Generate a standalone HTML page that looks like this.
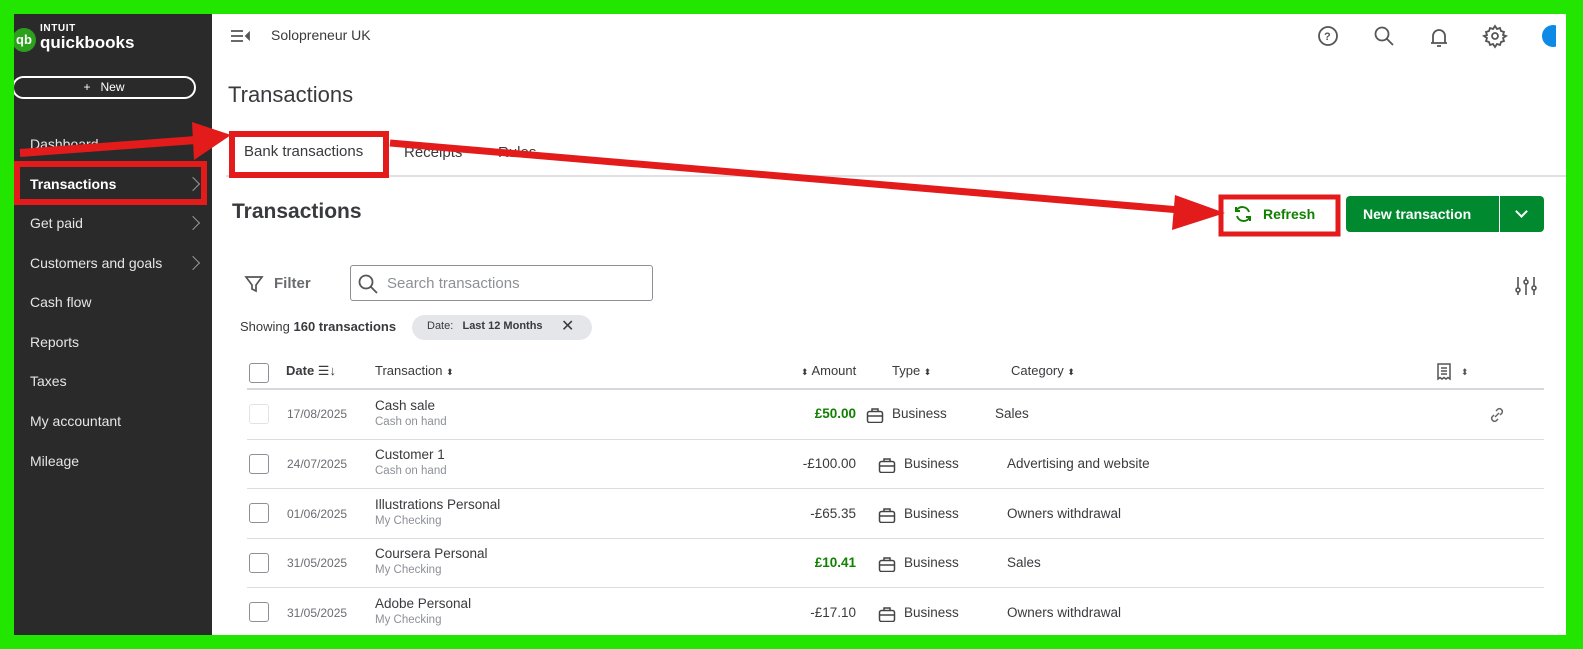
<!DOCTYPE html>
<html><head><meta charset="utf-8"><style>
*{margin:0;padding:0;box-sizing:border-box}
body{width:1583px;height:649px;position:relative;overflow:hidden;background:#22e600;font-family:"Liberation Sans",Arial,sans-serif;color:#393a3d}
.a{position:absolute;white-space:nowrap}
#main{position:absolute;left:14px;top:14px;width:1552px;height:621px;background:#fff;overflow:hidden}
#side{position:absolute;left:0;top:0;width:198px;height:621px;background:#2a2a2a;color:#e8e8e8}
.nav{position:absolute;left:16px;font-size:14px;color:#e6e6e6}
.chev{position:absolute;left:174px;width:10px;height:10px;border-right:1.5px solid #999;border-bottom:1.5px solid #999;transform:rotate(-45deg)}
.hd{font-size:13px;color:#393a3d}
.row{position:absolute;left:233px;width:1297px;height:1px;background:#ddd}
.cb{position:absolute;left:235px;width:20px;height:20px;border:1.5px solid #8d9096;border-radius:3px}
.dt{position:absolute;left:273px;font-size:12px;color:#6b6c72}
.tn{position:absolute;left:361px;font-size:13.5px;color:#393a3d}
.ts{position:absolute;left:361px;font-size:11.5px;color:#8d9096}
.am{position:absolute;right:710px;font-size:13.5px;color:#393a3d;text-align:right}
.g{color:#108000;font-weight:bold}
.ty{position:absolute;font-size:13.5px;color:#393a3d}
.bag{position:absolute;width:18px;height:16px}
</style></head><body>
<div id="main">
 <div id="side">
  <div class="a" style="left:-2px;top:14px;width:24px;height:24px;border-radius:50%;background:#2ca01c;color:#fff;font-size:13px;font-weight:bold;text-align:center;line-height:24px">qb</div>
  <div class="a" style="left:26px;top:9px;font-size:10px;font-weight:bold;letter-spacing:0.6px;color:#fff">INTUIT</div>
  <div class="a" style="left:26px;top:19px;font-size:17px;font-weight:bold;color:#fff">quickbooks</div>
  <div class="a" style="left:-2px;top:62px;width:184px;height:23px;border:2px solid #fff;border-radius:12px;text-align:center;font-size:12px;line-height:19px;color:#fff">+&nbsp;&nbsp; New</div>
  <div class="nav" style="top:122px">Dashboard</div>
  <div class="nav" style="top:162px;font-weight:bold;color:#fff">Transactions</div><div class="chev" style="top:165px"></div>
  <div class="nav" style="top:201px">Get paid</div><div class="chev" style="top:204px"></div>
  <div class="nav" style="top:241px">Customers and goals</div><div class="chev" style="top:244px"></div>
  <div class="nav" style="top:280px">Cash flow</div>
  <div class="nav" style="top:320px">Reports</div>
  <div class="nav" style="top:359px">Taxes</div>
  <div class="nav" style="top:399px">My accountant</div>
  <div class="nav" style="top:439px">Mileage</div>
 </div>
 <svg class="a" style="left:216px;top:14px" width="22" height="16" fill="none" stroke="#555" stroke-width="1.8"><path d="M1 3h12M1 8h12M1 13h12"/><path d="M19 5l-3 3 3 3z" fill="#555"/></svg>
 <div class="a" style="left:257px;top:13px;font-size:14px;color:#393a3d">Solopreneur UK</div>
 <svg class="a" style="left:1302px;top:10px" width="240" height="26" fill="none" stroke="#555" stroke-width="1.8">
  <circle cx="12" cy="12" r="9"/><text x="8" y="16" font-size="11" fill="#555" stroke="none" font-weight="bold" font-family="Liberation Sans">?</text>
  <circle cx="66" cy="10" r="6.5"/><line x1="71" y1="15" x2="77" y2="21"/>
  <path d="M115 19h16M117 19v-7a6 6 0 0 1 12 0v7M121 22h4"/>
  <circle cx="179" cy="12" r="3"/>
  <path d="M179 2l2 3 3-1 1 3 3 1-1 3 3 1-3 2 1 3-3 1-1 3-3-1-2 3-2-3-3 1-1-3-3-1 1-3-3-2 3-1-1-3 3-1 1-3 3 1z"/>
  <circle cx="237" cy="12" r="11" fill="#0d8ae5" stroke="none"/>
 </svg>
 <div class="a" style="left:214px;top:68px;font-size:22px;color:#393a3d">Transactions</div>
 <div class="a" style="left:230px;top:129px;font-size:15px;color:#393a3d">Bank transactions</div>
 <div class="a" style="left:390px;top:130px;font-size:15px;color:#393a3d">Receipts</div>
 <div class="a" style="left:484px;top:130px;font-size:15px;color:#393a3d">Rules</div>
 <div class="a" style="left:212px;top:161px;width:1340px;height:2px;background:#e0e0e3"></div>
 <div class="a" style="left:218px;top:186px;font-size:21px;font-weight:bold;color:#393a3d">Transactions</div>
 <svg class="a" style="left:1219px;top:190px" width="20" height="20" fill="none" stroke="#108000" stroke-width="2"><path d="M16 8a7 7 0 0 0-13-1M4 12a7 7 0 0 0 13 1"/><path d="M3 3v4h4M17 17v-4h-4"/></svg>
 <div class="a" style="left:1249px;top:192px;font-size:14px;font-weight:bold;color:#108000">Refresh</div>
 <div class="a" style="left:1332px;top:182px;width:198px;height:36px;background:#00892e;border-radius:4px"></div>
 <div class="a" style="left:1485px;top:182px;width:1px;height:36px;background:#fff"></div>
 <div class="a" style="left:1349px;top:192px;font-size:14px;font-weight:bold;color:#fff">New transaction</div>
 <div class="a" style="left:1503px;top:193px;width:9px;height:9px;border-right:2px solid #fff;border-bottom:2px solid #fff;transform:rotate(45deg)"></div>
 <svg class="a" style="left:230px;top:260px" width="20" height="20" fill="none" stroke="#555" stroke-width="1.7"><path d="M2 3h16l-6 8v6l-4 -2v-4z"/></svg>
 <div class="a" style="left:260px;top:261px;font-size:15px;font-weight:bold;color:#6b6c72">Filter</div>
 <div class="a" style="left:336px;top:251px;width:303px;height:36px;border:1.5px solid #8d9096;border-radius:3px"></div>
 <svg class="a" style="left:343px;top:259px" width="22" height="22" fill="none" stroke="#555" stroke-width="1.8"><circle cx="9" cy="9" r="6.5"/><line x1="14" y1="14" x2="20" y2="20"/></svg>
 <div class="a" style="left:373px;top:261px;font-size:15px;color:#8d9096">Search transactions</div>
 <svg class="a" style="left:1500px;top:260px" width="24" height="24" fill="none" stroke="#555" stroke-width="1.6"><path d="M4 3v18M12 3v18M20 3v18"/><circle cx="4" cy="16" r="2" fill="#fff"/><circle cx="12" cy="8" r="2" fill="#fff"/><circle cx="20" cy="14" r="2" fill="#fff"/></svg>
 <div class="a" style="left:226px;top:305px;font-size:13px;color:#393a3d">Showing <b>160 transactions</b></div>
 <div class="a" style="left:398px;top:301px;width:180px;height:25px;border-radius:13px;background:#e4e6ea"></div>
 <div class="a" style="left:413px;top:306px;font-size:11px;color:#393a3d">Date:&nbsp;&nbsp; <b>Last 12 Months</b></div>
 <div class="a" style="left:547px;top:302px;font-size:16px;color:#393a3d">✕</div>
 <div class="cb" style="top:349px"></div>
 <div class="a hd" style="left:272px;top:349px;font-weight:bold">Date <span style="font-weight:normal">☰↓</span></div>
 <div class="a hd" style="left:361px;top:349px">Transaction <span style="font-size:9px">⬍</span></div>
 <div class="a hd" style="left:787px;top:349px"><span style="font-size:9px">⬍</span> Amount</div>
 <div class="a hd" style="left:878px;top:349px">Type <span style="font-size:9px">⬍</span></div>
 <div class="a hd" style="left:997px;top:349px">Category <span style="font-size:9px">⬍</span></div>
 <svg class="a" style="left:1422px;top:348px" width="40" height="20" fill="none" stroke="#555" stroke-width="1.5"><path d="M2 2h12v15l-2-1.5-2 1.5-2-1.5-2 1.5-2-1.5-2 1.5z"/><path d="M5 6h6M5 9h6M5 12h6"/><text x="25" y="13" font-size="9" fill="#555" stroke="none">⬍</text></svg>
 <div class="row" style="top:374px;height:2px;background:#d4d7dc"></div>
 <div class="row" style="top:425px"></div><div class="row" style="top:474px"></div><div class="row" style="top:524px"></div><div class="row" style="top:573px"></div>

 <svg width="0" height="0" style="position:absolute"><defs><g id="bg" fill="none" stroke="#444" stroke-width="1.5"><rect x="1.5" y="4.5" width="15" height="11" rx="2"/><path d="M6 4.5V2h6v2.5M1.5 9h15"/></g></defs></svg>

 <div class="cb" style="top:390px;border-color:#e3e3e3"></div><div class="dt" style="top:393px">17/08/2025</div>
 <div class="tn" style="top:384px">Cash sale</div><div class="ts" style="top:402px">Cash on hand</div>
 <div class="am g" style="top:392px">£50.00</div>
 <svg class="bag" style="left:852px;top:393px"><use href="#bg"/></svg><div class="ty" style="left:878px;top:392px">Business</div><div class="ty" style="left:981px;top:392px">Sales</div>
 <svg class="a" style="left:1474px;top:392px" width="18" height="18" fill="none" stroke="#666" stroke-width="1.5"><path d="M7 11l4-4M8 5l2-2a3 3 0 0 1 4 4l-2 2M10 13l-2 2a3 3 0 0 1-4-4l2-2"/></svg>

 <div class="cb" style="top:440px"></div><div class="dt" style="top:443px">24/07/2025</div>
 <div class="tn" style="top:433px">Customer 1</div><div class="ts" style="top:451px">Cash on hand</div>
 <div class="am" style="top:442px">-£100.00</div>
 <svg class="bag" style="left:864px;top:443px"><use href="#bg"/></svg><div class="ty" style="left:890px;top:442px">Business</div><div class="ty" style="left:993px;top:442px">Advertising and website</div>

 <div class="cb" style="top:489px"></div><div class="dt" style="top:493px">01/06/2025</div>
 <div class="tn" style="top:483px">Illustrations Personal</div><div class="ts" style="top:501px">My Checking</div>
 <div class="am" style="top:492px">-£65.35</div>
 <svg class="bag" style="left:864px;top:493px"><use href="#bg"/></svg><div class="ty" style="left:890px;top:492px">Business</div><div class="ty" style="left:993px;top:492px">Owners withdrawal</div>

 <div class="cb" style="top:539px"></div><div class="dt" style="top:542px">31/05/2025</div>
 <div class="tn" style="top:532px">Coursera Personal</div><div class="ts" style="top:550px">My Checking</div>
 <div class="am g" style="top:541px">£10.41</div>
 <svg class="bag" style="left:864px;top:542px"><use href="#bg"/></svg><div class="ty" style="left:890px;top:541px">Business</div><div class="ty" style="left:993px;top:541px">Sales</div>

 <div class="cb" style="top:588px"></div><div class="dt" style="top:592px">31/05/2025</div>
 <div class="tn" style="top:582px">Adobe Personal</div><div class="ts" style="top:600px">My Checking</div>
 <div class="am" style="top:591px">-£17.10</div>
 <svg class="bag" style="left:864px;top:592px"><use href="#bg"/></svg><div class="ty" style="left:890px;top:591px">Business</div><div class="ty" style="left:993px;top:591px">Owners withdrawal</div>
</div>
<svg class="a" style="left:0;top:0" width="1583" height="649" fill="none">
 <rect x="232" y="134" width="154" height="41" stroke="#e31b1b" stroke-width="6"/>
 <rect x="17" y="164" width="187" height="38" stroke="#e31b1b" stroke-width="6"/>
 <rect x="1221" y="197" width="117" height="37" stroke="#e31b1b" stroke-width="5"/>
 <path d="M20 153L196 140" stroke="#e31b1b" stroke-width="8"/>
 <polygon points="192,122 231,135 194,160" fill="#e31b1b"/>
 <path d="M390 143L1180 210" stroke="#e31b1b" stroke-width="7"/>
 <polygon points="1175,195 1225,213 1172,230" fill="#e31b1b"/>
</svg>
</body></html>
